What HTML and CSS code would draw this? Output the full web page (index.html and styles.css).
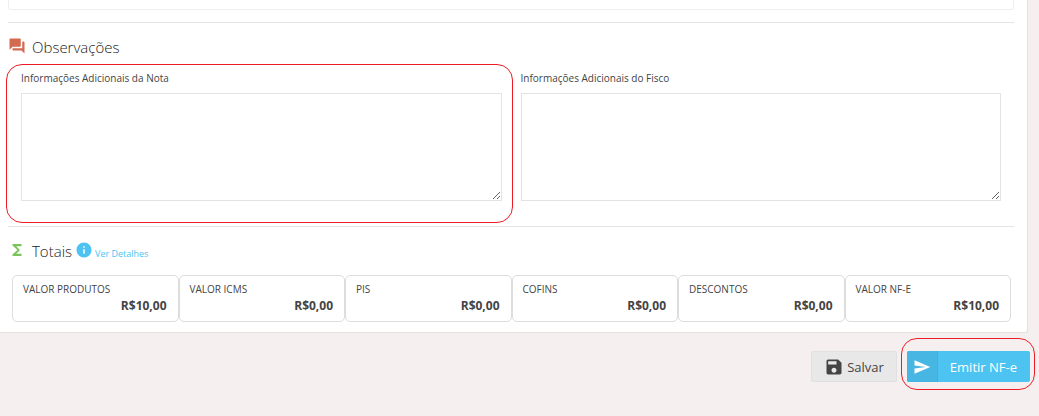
FILE: index.html
```html
<!DOCTYPE html>
<html lang="pt-BR">
<head>
    <meta charset="UTF-8">
    <meta name="viewport" content="width=device-width, initial-scale=1.0">
    <title>Emitir NF-e</title>
    <link rel="stylesheet" href="styles.css">
</head>
<body>
    <main class="card">
        <div class="previous-panel"></div>

        <section class="section notes">
            <h2 class="title">
                <svg class="icon orange" viewBox="0 0 24 24"><path d="M21 6h-2v9H6v2c0 .55.45 1 1 1h11l4 4V7c0-.55-.45-1-1-1zm-4 6V3c0-.55-.45-1-1-1H3c-.55 0-1 .45-1 1v14l4-4h10c.55 0 1-.45 1-1z"/></svg>
                <span>Observações</span>
            </h2>
            <div class="fields">
                <div class="field highlight">
                    <label for="infoNota">Informações Adicionais da Nota</label>
                    <textarea id="infoNota"></textarea>
                </div>
                <div class="field">
                    <label for="infoFisco">Informações Adicionais do Fisco</label>
                    <textarea id="infoFisco"></textarea>
                </div>
            </div>
        </section>

        <section class="section totals">
            <div class="totals-head">
                <h2 class="title">
                    <svg class="icon green" viewBox="0 0 24 24"><path d="M18 4H6v2l6.500 6L6 18v2h12v-3h-7l5-5-5-5h7z"/></svg>
                    <span>Totais</span>
                </h2>
                <a class="details" href="#">
                    <svg class="icon" viewBox="0 0 24 24"><path d="M12 2C6.480 2 2 6.480 2 12s4.480 10 10 10 10-4.480 10-10S17.520 2 12 2zm1 15h-2v-6h2v6zm0-8h-2V7h2v2z"/></svg>
                    <span>Ver Detalhes</span>
                </a>
            </div>
            <div class="boxes">
                <div class="box"><span>VALOR PRODUTOS</span><strong>R$10,00</strong></div>
                <div class="box"><span>VALOR ICMS</span><strong>R$0,00</strong></div>
                <div class="box"><span>PIS</span><strong>R$0,00</strong></div>
                <div class="box"><span>COFINS</span><strong>R$0,00</strong></div>
                <div class="box"><span>DESCONTOS</span><strong>R$0,00</strong></div>
                <div class="box"><span>VALOR NF-E</span><strong>R$10,00</strong></div>
            </div>
        </section>
    </main>

    <div class="actions">
        <button type="button" class="btn save">
            <svg viewBox="0 0 24 24"><path d="M17 3H5c-1.110 0-2 .9-2 2v14c0 1.100.89 2 2 2h14c1.100 0 2-.9 2-2V7l-4-4zm-5 16c-1.660 0-3-1.340-3-3s1.340-3 3-3 3 1.340 3 3-1.340 3-3 3zm3-10H5V5h10v4z"/></svg>
            <span>Salvar</span>
        </button>
        <div class="highlight highlight-btn">
            <button type="button" class="btn send">
                <span class="btn-icon"><svg viewBox="0 0 24 24"><path d="M2 21L23 12 2 3v7l15 2-15 2z"/></svg></span>
                <span class="btn-text">Emitir NF-e</span>
            </button>
        </div>
    </div>
</body>
</html>
```
FILE: styles.css
```css
* {
    box-sizing: border-box;
}
body {
    margin: 0;
    background-color: #f5efef;
    color: #444;
    font-family: "Open Sans", "Noto Sans", sans-serif;
    font-size: 10px;
    line-height: 14px;
}
svg {
    display: block;
    flex: none;
    fill: currentColor;
}

/* card */
.card {
    margin-right: 11px;
    padding: 0 13px 10px 8px;
    background-color: #fff;
    border: 1px solid #e2e0e0;
    border-width: 0 1px 1px 0;
    border-bottom-right-radius: 3px;
}
.previous-panel {
    height: 10px;
    margin-bottom: 12px;
    border: 1px solid #eee;
    border-top: 0;
    border-radius: 0 0 3px 3px;
}
.section {
    border-top: 1px solid #e3e3e3;
}

/* titles */
.title {
    display: flex;
    gap: 6px;
    margin: 0;
    color: #222;
    font-size: 15px;
    font-weight: 300;
    line-height: 20px;
}
.icon {
    width: 18px;
    height: 18px;
}
.orange {
    color: #d26b50;
}
.green {
    color: #7cc35c;
}

/* notes */
.notes {
    padding: 14px 13px 25px 0;
}
.fields {
    display: flex;
    gap: 19px;
    padding-left: 13px;
    margin-top: 14px;
}
.field {
    flex: 1;
}
.field label {
    display: block;
    margin-bottom: 8px;
}
.field textarea {
    display: block;
    width: 100%;
    height: 108px;
    padding: 6px;
    border: 1px solid #e3e3e3;
    background-color: #fff;
    color: inherit;
    font: inherit;
    resize: vertical;
}

/* red outline over the marked items */
.highlight {
    position: relative;
}
.highlight::after {
    content: "";
    position: absolute;
    inset: -7px -11px -22px -15px;
    border: 1px solid #ed1c24;
    border-radius: 16px;
    pointer-events: none;
}
.highlight-btn::after {
    inset: -13px -5px -8px -6px;
}

/* totals */
.totals {
    padding-top: 14px;
}
.totals-head {
    display: flex;
    gap: 3px;
    margin-bottom: 14px;
}
.details {
    display: flex;
    gap: 2px;
    color: #4dc3f2;
    font-size: 9px;
    line-height: 26px;
    height: 20px;
    text-decoration: none;
}
.boxes {
    display: flex;
    padding: 0 3px 0 4px;
}
.box {
    flex: 1;
    display: flex;
    flex-direction: column;
    gap: 1px;
    height: 47px;
    padding: 6px 11px 6px 10px;
    border: 1px solid #ddd;
    border-radius: 5px;
}
.box strong {
    font-size: 12px;
    line-height: 17px;
    text-align: right;
}

/* buttons */
.actions {
    display: flex;
    justify-content: flex-end;
    gap: 10px;
    padding: 18px 9px 34px;
}
.btn {
    display: flex;
    align-items: center;
    height: 31px;
    padding: 0;
    border: 1px solid #e0e0e0;
    border-radius: 2px;
    color: #444;
    font-family: inherit;
    font-size: 13px;
    line-height: 18px;
    cursor: pointer;
}
.save {
    gap: 3px;
    padding: 0 12px;
    background-color: #e8e8e8;
}
.save svg {
    width: 20px;
    height: 20px;
}
.send {
    border: 0;
    background-color: #4dc3f2;
    color: #fff;
}
.btn-icon {
    display: flex;
    align-items: center;
    height: 100%;
    padding: 0 6px;
    background-color: #48b6e3;
    border-right: 1px solid #45afda;
    border-radius: 2px 0 0 2px;
}
.btn-icon svg {
    width: 18px;
    height: 18px;
}
.btn-text {
    padding: 0 13px 0 12px;
}
```
